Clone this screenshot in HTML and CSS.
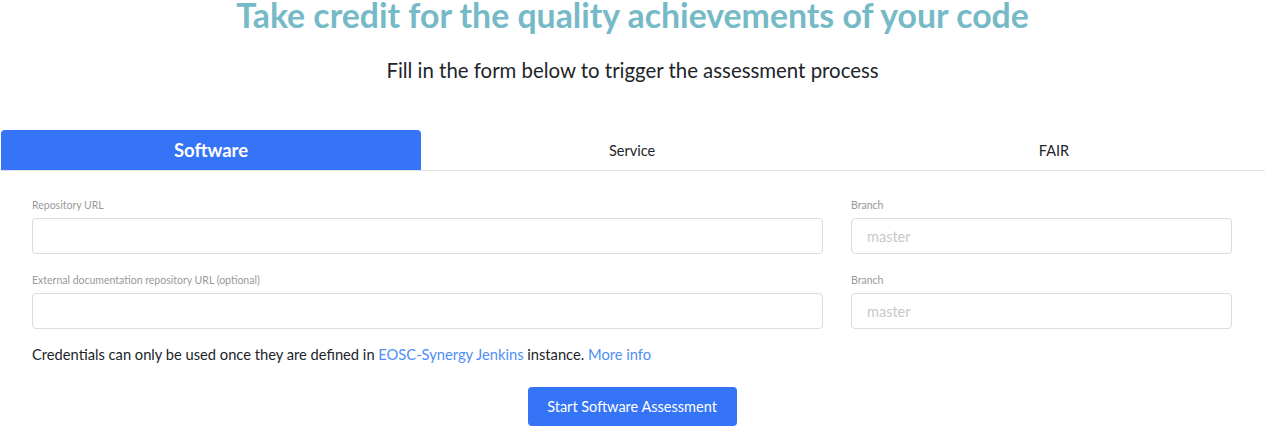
FILE: index.html
```html
<!DOCTYPE html>
<html>
<head>
<meta charset="utf-8">
<link rel="stylesheet" href="styles.css">
</head>
<body>
<div class="page">
  <header class="hero">
    <h1 class="title">Take credit for the quality achievements of your code</h1>
    <p class="subtitle">Fill in the form below to trigger the assessment process</p>
  </header>
  <nav class="tabs">
    <div class="tab active">Software</div>
    <div class="tab">Service</div>
    <div class="tab">FAIR</div>
  </nav>
  <form class="form">
    <div class="row">
      <div class="field">
        <label class="label">Repository URL</label>
        <input class="input" type="text">
      </div>
      <div class="field">
        <label class="label">Branch</label>
        <input class="input" type="text" placeholder="master">
      </div>
    </div>
    <div class="row">
      <div class="field">
        <label class="label">External documentation repository URL (optional)</label>
        <input class="input" type="text">
      </div>
      <div class="field">
        <label class="label">Branch</label>
        <input class="input" type="text" placeholder="master">
      </div>
    </div>
    <p class="note">Credentials can only be used once they are defined in <a href="#" class="link">EOSC-Synergy Jenkins</a> instance. <a href="#" class="link">More info</a></p>
    <div class="actions">
      <button type="button" class="btn">Start Software Assessment</button>
    </div>
  </form>
</div>
</body>
</html>
```
FILE: styles.css
```css
* { box-sizing: border-box; }
html, body { margin: 0; padding: 0; background: #fff; }
body {
  font-family: "Lato", "Noto Sans", sans-serif;
  color: #212529;
  overflow: hidden;
}
.page { margin-top: -5px; }
.hero { text-align: center; }
.title {
  margin: 0;
  font-size: 33.8px;
  line-height: 40px;
  font-weight: 700;
  color: #75bac6;
}
.subtitle {
  margin: 23px 0 0;
  font-size: 20.4px;
  line-height: 24px;
  color: #212529;
}
.tabs {
  margin-top: 48px;
  display: grid;
  grid-template-columns: 421px 422px 1fr;
  border-bottom: 1px solid #dee2e6;
  height: 41px;
}
.tab {
  display: flex;
  align-items: center;
  justify-content: center;
  font-size: 14.5px;
  color: #212529;
  height: 40px;
}
.tab.active {
  margin-left: 1px;
  background: #3574f6;
  color: #fff;
  font-weight: 700;
  font-size: 18.5px;
  border-radius: 4px 4px 0 0;
}
.form {
  padding: 28px 33px 0 32px;
}
.row {
  display: grid;
  grid-template-columns: 1fr 381px;
  column-gap: 28px;
  margin-bottom: 20px;
}
.row + .row { margin-bottom: 14px; }
.field { display: flex; flex-direction: column; }
.label {
  font-size: 10.5px;
  line-height: 12px;
  color: #999;
  margin-bottom: 7px;
}
.input {
  height: 36px;
  border: 1px solid #dcdcdc;
  border-radius: 4px;
  padding: 0 15px;
  font-family: inherit;
  font-size: 14.5px;
  color: #212529;
  background: #fff;
}
.input::placeholder { color: #c8c8c8; }
.note {
  margin: 15px 0 0;
  font-size: 14.7px;
  line-height: 20px;
}
.link { color: #4e8ef7; text-decoration: none; }
.actions {
  display: flex;
  justify-content: center;
  margin-top: 23px;
}
.btn {
  width: 209px;
  height: 39px;
  background: #3574f6;
  color: #fff;
  border: none;
  border-radius: 4px;
  font-family: inherit;
  font-size: 14.5px;
}
```
